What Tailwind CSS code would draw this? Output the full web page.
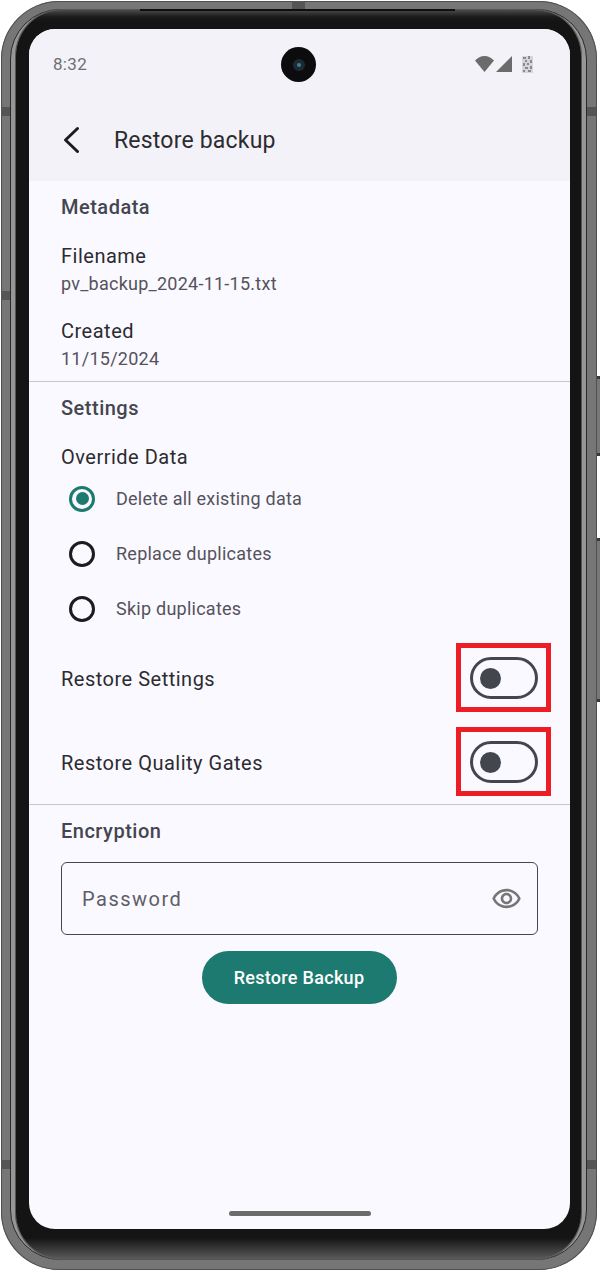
<!DOCTYPE html>
<html lang="en">
<head>
    <meta charset="UTF-8">
    <meta name="viewport" content="width=device-width, initial-scale=1.0">
    <title>Restore backup</title>
    <script src="https://cdn.jsdelivr.net/npm/@tailwindcss/browser@4"></script>
</head>
<body class="bg-white font-['Roboto',sans-serif]">

    <div class="relative w-[600px] h-[1271px] overflow-hidden">

        <!-- Side buttons -->
        <div class="absolute left-[595px] top-[376px] w-[5px] h-[80px] bg-[#777777] border-y-[3px] border-[#3a3a3a]"></div>
        <div class="absolute left-[595px] top-[538px] w-[5px] h-[164px] bg-[#777777] border-y-[3px] border-[#3a3a3a]"></div>

        <!-- Phone frame -->
        <div class="absolute left-[1px] top-[1px] w-[596px] h-[1269px] rounded-[58px] bg-[#767676] shadow-[inset_0_0_0_1px_#505050] pl-[9px] pt-[8px] pr-[10px] pb-[10px]">
            <div class="h-full rounded-[50px] border border-[#2a2a2a] bg-[#969696] pl-[5px] pr-[5px]">
                <div class="h-full rounded-[46px] shadow-[0_0_0_1px_#555555] pl-[13px] pt-[19px] pr-[11px] pb-[30px] bg-[linear-gradient(to_bottom,#4a4a4a_0px,#1a1a1a_7px,#141414_12px,#141414_1228px,#5e5e5e_1250px)]">

                    <!-- Screen -->
                    <div class="relative h-full rounded-[26px] overflow-hidden bg-[#faf9ff] flex flex-col">

                        <!-- Top bars -->
                        <div class="h-[152px] bg-[#f3f2f8] shrink-0">
                            <div class="relative h-[70px] pl-[24px] pr-[37px] flex items-center justify-between">
                                <span class="pt-[2px] text-[17px] tracking-[0.3px] text-[#6f6e74]">8:32</span>
                                <div class="absolute left-[252px] top-[18px] w-[35px] h-[35px] rounded-full bg-[#0c0c0e] flex items-center justify-center">
                                    <div class="w-[12px] h-[12px] rounded-full bg-[#1d2a33] flex items-center justify-center">
                                        <div class="w-[4px] h-[4px] rounded-full bg-[#3d7f96]"></div>
                                    </div>
                                </div>
                                <div class="flex items-center gap-[2px]">
                                    <svg width="19" height="16" viewBox="0 0 19 16"><path d="M0 4.500C2.500 1.800 5.800 0 9.500 0s7 1.800 9.500 4.500L9.500 16z" fill="#6b6b6b"/></svg>
                                    <svg width="16" height="16" viewBox="0 0 16 16"><path d="M16 0v16H0z" fill="#6b6b6b"/></svg>
                                    <svg class="ml-[8px]" width="11" height="17" viewBox="0 0 11 17">
                                        <rect width="11" height="17" fill="#d6d6d9"/>
                                        <path d="M1 1h3v2H1zM6 0h2v3H6zM3 4h2v2H3zM8 4h2v3H8zM1 7h2v3H1zM5 7h2v2H5zM3 11h3v2H3zM8 10h2v3H8zM1 14h2v2H1zM6 14h3v2H6z" fill="#8a8a8d"/>
                                    </svg>
                                </div>
                            </div>
                            <div class="h-[82px] flex items-center pl-[33px]">
                                <svg width="20" height="28" viewBox="0 0 20 28" fill="none" stroke="#1d1b20" stroke-width="3" stroke-linecap="round" stroke-linejoin="round"><path d="M15.500 2.500 3.500 14l12 11.500"/></svg>
                                <h1 class="ml-[32px] text-[23px] tracking-[0.2px] leading-none text-[#2c2b30]">Restore backup</h1>
                            </div>
                        </div>

                        <!-- Metadata -->
                        <section class="px-[32px]">
                            <h2 class="h-[52px] flex items-center text-[20px] tracking-[0.5px] font-medium text-[#44464f]">Metadata</h2>
                            <p class="mt-[10px] h-[26px] flex items-center text-[20px] tracking-[0.5px] text-[#2c2b30]">Filename</p>
                            <p class="h-[28px] flex items-center text-[18px] tracking-[0.25px] text-[#55525c]">pv_backup_2024-11-15.txt</p>
                            <p class="mt-[21px] h-[26px] flex items-center text-[20px] tracking-[0.5px] text-[#2c2b30]">Created</p>
                            <p class="h-[28px] flex items-center text-[18px] tracking-[0.25px] text-[#55525c]">11/15/2024</p>
                        </section>
                        <div class="mt-[9px] h-[1px] bg-[#c9c6cc] shrink-0"></div>

                        <!-- Settings -->
                        <section class="px-[32px]">
                            <h2 class="h-[52px] flex items-center text-[20px] tracking-[0.5px] font-medium text-[#44464f]">Settings</h2>
                            <p class="mt-[10px] h-[26px] flex items-center text-[20px] tracking-[0.5px] text-[#2c2b30]">Override Data</p>
                            <div class="mt-[1px]">
                                <div class="h-[55px] flex items-center pl-[8px]">
                                    <div class="w-[26px] h-[26px] rounded-full border-[3px] border-[#1d7a70] flex items-center justify-center">
                                        <div class="w-[13px] h-[13px] rounded-full bg-[#1d7a70]"></div>
                                    </div>
                                    <span class="ml-[21px] text-[18px] tracking-[0.22px] text-[#55525c]">Delete all existing data</span>
                                </div>
                                <div class="h-[55px] flex items-center pl-[8px]">
                                    <div class="w-[26px] h-[26px] rounded-full border-[3px] border-[#1d1b20]"></div>
                                    <span class="ml-[21px] text-[18px] tracking-[0.25px] text-[#55525c]">Replace duplicates</span>
                                </div>
                                <div class="h-[55px] flex items-center pl-[8px]">
                                    <div class="w-[26px] h-[26px] rounded-full border-[3px] border-[#1d1b20]"></div>
                                    <span class="ml-[21px] text-[18px] tracking-[0.25px] text-[#55525c]">Skip duplicates</span>
                                </div>
                            </div>
                            <div class="h-[84px] flex items-center justify-between">
                                <span class="pt-[1px] text-[20px] tracking-[0.5px] text-[#2c2b30]">Restore Settings</span>
                                <div class="relative w-[68px] h-[42px] rounded-full border-[3px] border-[#44464f] flex items-center pl-[7px]">
                                    <div class="w-[21px] h-[21px] rounded-full bg-[#44464f]"></div>
                                    <div class="absolute left-[-17px] top-[-17px] w-[95px] h-[69px] border-[5px] border-[#ee1c25]"></div>
                                </div>
                            </div>
                            <div class="h-[84px] flex items-center justify-between">
                                <span class="pt-[1px] text-[20px] tracking-[0.5px] text-[#2c2b30]">Restore Quality Gates</span>
                                <div class="relative w-[68px] h-[42px] rounded-full border-[3px] border-[#44464f] flex items-center pl-[7px]">
                                    <div class="w-[21px] h-[21px] rounded-full bg-[#44464f]"></div>
                                    <div class="absolute left-[-17px] top-[-17px] w-[95px] h-[69px] border-[5px] border-[#ee1c25]"></div>
                                </div>
                            </div>
                        </section>
                        <div class="h-[1px] bg-[#c9c6cc] shrink-0"></div>

                        <!-- Encryption -->
                        <section class="px-[32px]">
                            <h2 class="h-[52px] flex items-center text-[20px] tracking-[0.5px] font-medium text-[#44464f]">Encryption</h2>
                            <div class="mt-[5px] h-[73px] rounded-[6px] border-[1.5px] border-[#44464f] flex items-center justify-between pl-[20px] pr-[15px]">
                                <span class="text-[20px] tracking-[1.5px] text-[#5f5e66]">Password</span>
                                <svg width="31" height="31" viewBox="0 0 24 24" fill="#767676"><path d="M12 6.500c3.790 0 7.170 2.130 8.820 5.500-1.650 3.370-5.020 5.500-8.820 5.500S4.830 15.370 3.180 12C4.830 8.630 8.210 6.500 12 6.500m0-2C7 4.500 2.730 7.610 1 12c1.730 4.390 6 7.500 11 7.500s9.270-3.110 11-7.500c-1.730-4.390-6-7.500-11-7.500zm0 5c1.380 0 2.500 1.120 2.500 2.500s-1.120 2.500-2.500 2.500-2.500-1.120-2.500-2.500 1.120-2.500 2.500-2.500m0-2c-2.480 0-4.500 2.020-4.500 4.500s2.020 4.500 4.500 4.500 4.500-2.020 4.500-4.500-2.020-4.500-4.500-4.500z"/></svg>
                            </div>
                            <div class="mt-[16px] pr-[1px] flex justify-center">
                                <button class="w-[195px] h-[53px] rounded-full bg-[#1d7a70] text-white text-[18px] tracking-[0.3px] font-medium">Restore Backup</button>
                            </div>
                        </section>

                        <!-- Gesture bar -->
                        <div class="mt-auto mb-[13px] mx-auto w-[142px] h-[5px] rounded-full bg-[#6b6b6b]"></div>
                    </div>
                </div>
            </div>
        </div>

        <!-- Frame seams -->
        <div class="absolute left-[140px] top-[9px] w-[315px] h-[2px] bg-[#0e0e0e]"></div>
        <div class="absolute left-[292px] top-[1px] w-[13px] h-[8px] bg-[#555555]"></div>
        <div class="absolute left-[1px] top-[107px] w-[9px] h-[9px] bg-[#555555]"></div>
        <div class="absolute left-[1px] top-[291px] w-[9px] h-[9px] bg-[#555555]"></div>
        <div class="absolute left-[1px] top-[1160px] w-[9px] h-[9px] bg-[#555555]"></div>
        <div class="absolute left-[587px] top-[107px] w-[9px] h-[9px] bg-[#555555]"></div>
        <div class="absolute left-[587px] top-[1160px] w-[9px] h-[9px] bg-[#555555]"></div>
    </div>

</body>
</html>
